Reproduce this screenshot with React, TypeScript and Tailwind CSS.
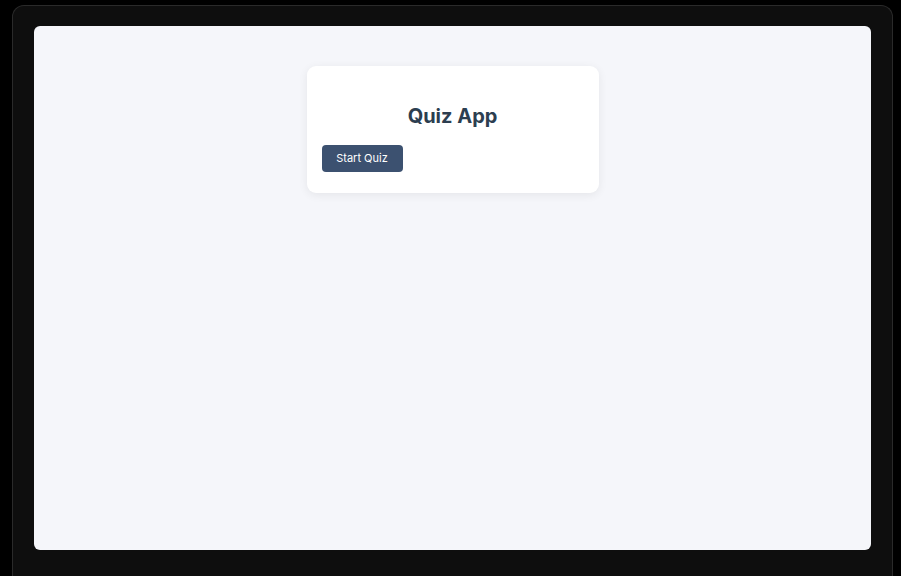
const App = () => {
  return (
    <div className="h-screen bg-black pt-[5px] pl-[12px] pr-[8px] overflow-hidden font-[Inter]">
      {/* Outer frame */}
      <div className="h-[600px] rounded-t-[12px] border border-[#2a2a2a] border-b-0 bg-[#0e0e0e] px-[21px] pt-[20px]">
        {/* Page */}
        <div className="h-[524px] rounded-[6px] bg-[#f5f6fa] pt-[40px] flex justify-center">
          {/* Card */}
          <div className="w-[292px] h-[127px] rounded-[9px] bg-white shadow-[0_2px_10px_rgba(0,0,0,0.07)] px-[15px] pt-[36px]">
            <h1 className="text-center text-[20px] leading-[28px] font-bold text-[#2c3e50]">
              Quiz App
            </h1>
            <button className="mt-[15px] h-[27px] w-[81px] rounded-[4px] bg-[#3c5170] text-white text-[11px]">
              Start Quiz
            </button>
          </div>
        </div>
      </div>
    </div>
  );
};

export default App;
